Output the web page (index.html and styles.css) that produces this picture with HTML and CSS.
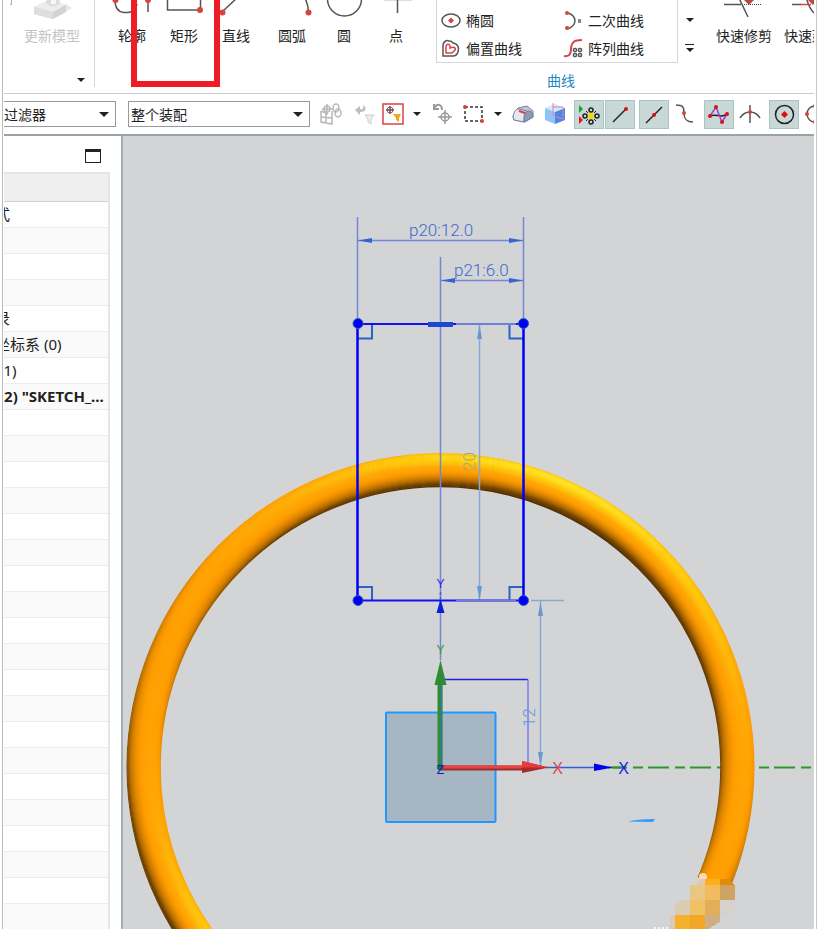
FILE: index.html
```html
<!DOCTYPE html>
<html lang="zh-CN">
<head>
    <meta charset="UTF-8">
    <meta name="viewport" content="width=device-width, initial-scale=1.0">
    <title>草图</title>
    <link rel="stylesheet" href="styles.css">
</head>
<body>
    <div class="app">
        <header class="ribbon">
            <div class="group update-group">
                <button class="tool disabled" disabled>
                    <svg width="84" height="25" viewBox="10 0 84 25">
                        <path d="M4 4.500 H11.500 V0" fill="none" stroke="#aaa"/>
                        <path d="M56 18 L72 8 L66 4 Z" fill="#e9e9e9"/>
                        <path d="M34 7 L50 0 L66 5 L66 12 L53 19 L34 14 Z" fill="#d3d3d3"/>
                        <path d="M34 7 L48 0 L66 5 L53 12 Z" fill="#ececec"/>
                        <path d="M34 7 L53 12 V19 L34 14 Z" fill="#dedede"/>
                        <ellipse cx="53" cy="2" rx="7" ry="4" fill="#ddd"/>
                        <rect x="51" y="0" width="5" height="4" fill="#f8f8f8"/>
                    </svg>
                    <span>更新模型</span>
                </button>
                <button class="drop group-drop" aria-label="更多"></button>
            </div>

            <div class="group curve-group">
                <button class="tool">
                    <svg width="52" height="25" viewBox="106 0 52 25">
                        <path d="M115 0 C115 8 118 12 124 12.500 H128 C133 12 136 9 137 4 M148 0 V12" class="ink"/>
                        <circle cx="115.500" cy="0" r="3" class="dot"/>
                        <circle cx="148" cy="0" r="3" class="dot"/>
                    </svg>
                    <span>轮廓</span>
                </button>
                <button class="tool marked">
                    <svg width="52" height="25" viewBox="158 0 52 25">
                        <path d="M167.500 0 V10 H200.500 V0" class="ink"/>
                        <circle cx="200" cy="10" r="3" class="dot"/>
                    </svg>
                    <span>矩形</span>
                </button>
                <button class="tool">
                    <svg width="52" height="25" viewBox="210 0 52 25">
                        <path d="M222 12 L238 -3" class="ink"/>
                        <circle cx="222.500" cy="12.500" r="3" class="dot"/>
                    </svg>
                    <span>直线</span>
                </button>
                <button class="tool wide">
                    <svg width="60" height="25" viewBox="262 0 60 25">
                        <path d="M305 -2 Q308 4 308.500 12" class="ink"/>
                        <circle cx="308.500" cy="12.500" r="3" class="dot"/>
                    </svg>
                    <span>圆弧</span>
                </button>
                <button class="tool narrow">
                    <svg width="44" height="25" viewBox="322 0 44 25">
                        <circle cx="344.500" cy="-1" r="17" class="ink"/>
                    </svg>
                    <span>圆</span>
                </button>
                <button class="tool wide">
                    <svg width="60" height="25" viewBox="366 0 60 25">
                        <path d="M384 0 H412" stroke="#bbb"/>
                        <path d="M397.500 0 V13" class="ink"/>
                    </svg>
                    <span>点</span>
                </button>

                <div class="gallery-wrap">
                    <div class="gallery">
                        <button class="entry">
                            <svg width="20" height="20" viewBox="0 0 20 20">
                                <ellipse cx="10" cy="10.500" rx="9" ry="6.500" class="ink"/>
                                <path d="M10 7.500 L13 10.500 L10 13.500 L7 10.500 Z" class="dot"/>
                            </svg>
                            <span>椭圆</span>
                        </button>
                        <button class="entry">
                            <svg width="20" height="20" viewBox="0 0 20 20">
                                <path d="M4 3 C9 3 12 8 12 10.500 C12 15 8 18 4 19" class="ink"/>
                                <circle cx="4" cy="3" r="2" class="dot"/>
                                <circle cx="4" cy="18" r="2" class="dot"/>
                                <rect x="15" y="9" width="3" height="4" fill="#888"/>
                            </svg>
                            <span>二次曲线</span>
                        </button>
                        <button class="entry">
                            <svg width="20" height="20" viewBox="0 0 20 20">
                                <path d="M2 18 V8 C2 3 6 2 8 3 C11 3 12 5 12 5 C18 6 18 11 17 14 C16 17 14 18 12 18 Z" class="ink"/>
                                <path d="M5 15 V9 C5 6 8 5 9 8 V10 C13 8 15 10 14 12 L11 15 Z" class="redline"/>
                            </svg>
                            <span>偏置曲线</span>
                        </button>
                        <button class="entry">
                            <svg width="20" height="20" viewBox="0 0 20 20">
                                <path d="M1 18 C8 19 8 14 8 10 C9 4 11 2 19 2" class="redline thick"/>
                                <g class="ink">
                                    <rect x="10.500" y="10.500" width="3" height="3" rx="1"/>
                                    <rect x="15.500" y="10.500" width="3" height="3" rx="1"/>
                                    <rect x="10.500" y="15.500" width="3" height="3" rx="1"/>
                                    <rect x="15.500" y="15.500" width="3" height="3" rx="1"/>
                                </g>
                            </svg>
                            <span>阵列曲线</span>
                        </button>
                    </div>
                    <div class="group-name">曲线</div>
                </div>
                <div class="scroller">
                    <button class="drop" aria-label="向下"></button>
                    <button class="drop more" aria-label="展开"></button>
                </div>

                <button class="tool wide">
                    <svg width="60" height="25" viewBox="714 0 60 25">
                        <path d="M724 4.500 H741 M738 -4 L748 17" class="ink"/>
                        <path d="M744 4.500 H762" stroke="#444" stroke-dasharray="1 1"/>
                        <path d="M744 0 H754 L749 5 Z" fill="#b9493f"/>
                    </svg>
                    <span>快速修剪</span>
                </button>
                <button class="tool wide last">
                    <svg width="60" height="25" viewBox="782 0 60 25">
                        <path d="M792 4.500 H801 M806 -4 C808 6 811 10 814 13" class="ink"/>
                        <path d="M800 4.500 H811" class="redline"/>
                        <path d="M808 0 H818 L813 5 Z" fill="#b9493f"/>
                    </svg>
                    <span>快速延伸</span>
                </button>
            </div>
        </header>

        <div class="selection-bar">
            <div class="select filter">
                <select aria-label="过滤器"><option>过滤器</option></select>
            </div>
            <div class="select scope">
                <select aria-label="选择范围"><option>整个装配</option></select>
            </div>
            <div class="icons">
                <div class="set">
                    <button class="icon" aria-label="装配约束">
                        <svg width="24" height="24" viewBox="0 0 24 24" fill="none" stroke="#b8b8b8" stroke-width="1.500">
                            <path d="M2 9 V20 L13 22 V9 M2 15 L13 16 M7 10 V21 M2 9 L7 11 M8 2 V13 M3 7 H14"/>
                            <circle cx="8" cy="7" r="3"/>
                            <ellipse cx="17" cy="6" rx="3" ry="4"/>
                            <ellipse cx="19" cy="11" rx="3" ry="4"/>
                        </svg>
                    </button>
                </div>
                <div class="set">
                    <button class="icon" aria-label="重置过滤器">
                        <svg width="24" height="24" viewBox="0 0 24 24">
                            <path d="M2 8 L7 4 V7 C10 8 11 6 10 3 C14 5 14 10 7 10 V13 Z" fill="#bdbdbd"/>
                            <path d="M12 13 H21 L18 17 V22 L15 20 V17 Z" fill="#eee" stroke="#ccc"/>
                        </svg>
                    </button>
                    <button class="icon small" aria-label="过滤">
                        <svg width="22" height="22" viewBox="0 0 22 22">
                            <rect x="1" y="1" width="20" height="20" fill="#fff" stroke="#d8434b" stroke-width="1.500"/>
                            <circle cx="8" cy="7" r="3" fill="none" stroke="#d8434b"/>
                            <path d="M8 3 V11 M4 7 H12" stroke="#555" stroke-width="1.500"/>
                            <path d="M11 11 H19 L17 15 V19 L14 17 V15 Z" fill="#f0a91e"/>
                        </svg>
                    </button>
                </div>
                <button class="drop" aria-label="过滤选项"></button>
                <div class="set">
                    <button class="icon" aria-label="撤销选择">
                        <svg width="24" height="24" viewBox="0 0 24 24" fill="none" stroke="#999" stroke-width="1.500">
                            <path d="M3 2 V7 H8 M3 6 C6 1 11 2 11 8" stroke-width="2"/>
                            <circle cx="14" cy="15" r="4"/>
                            <path d="M14 8 V22 M7 15 H21"/>
                        </svg>
                    </button>
                    <button class="icon" aria-label="矩形选择">
                        <svg width="24" height="24" viewBox="0 0 24 24">
                            <rect x="3" y="5" width="17" height="14" fill="none" stroke="#333" stroke-width="1.500" stroke-dasharray="3 2"/>
                            <circle cx="3" cy="5" r="2" class="dot"/>
                            <circle cx="20" cy="19" r="2" class="dot"/>
                        </svg>
                    </button>
                    <button class="drop" aria-label="选择方式"></button>
                </div>
                <div class="set">
                    <button class="icon" aria-label="着色">
                        <svg width="24" height="24" viewBox="0 0 24 24" stroke="#77809a">
                            <path d="M1 15 L6 6 L15 4 L21 9 V15 L13 20 L2 18 Z" fill="#bfc8db"/>
                            <path d="M1 15 C2 9 4 7 7 7 L15 9 C12 10 12 14 12 20 L2 18 Z" fill="#e4e8f1"/>
                            <path d="M12 20 C12 12 14 9 17 9 C20 9 21 12 21 15 Z" fill="#8b99b3"/>
                            <path d="M7 9 L13 11" stroke="#e23b3b" stroke-width="2"/>
                        </svg>
                    </button>
                    <button class="icon" aria-label="视图方块">
                        <svg width="24" height="24" viewBox="0 0 24 24">
                            <path d="M2 6 L12 2 L22 6 L12 10 Z" fill="#d5e8fb"/>
                            <path d="M2 6 L12 10 V22 L2 18 Z" fill="#8fc4f8"/>
                            <path d="M22 6 L12 10 V22 L22 18 Z" fill="#4e86e8"/>
                            <path d="M10 1 V14 L21 17 M10 5 H20 V15" fill="none" stroke="#d98a9e"/>
                        </svg>
                    </button>
                </div>
                <div class="set">
                    <button class="icon on" aria-label="启用捕捉点">
                        <svg width="24" height="24" viewBox="0 0 24 24">
                            <path d="M2 3 L6 7 L2 11 Z" fill="#14a51e"/>
                            <path d="M2 14 L6 18 L2 22 Z" fill="#e01818"/>
                            <circle cx="14" cy="14" r="3" fill="#f6d800"/>
                            <g fill="none" stroke="#222" stroke-width="1.500">
                                <circle cx="14" cy="8" r="2"/>
                                <circle cx="14" cy="20" r="2"/>
                                <circle cx="8" cy="14" r="2"/>
                                <circle cx="20" cy="14" r="2"/>
                            </g>
                            <path d="M9 9 L11 11 M19 9 L17 11 M9 19 L11 17 M19 19 L17 17" stroke="#222"/>
                        </svg>
                    </button>
                    <button class="icon on" aria-label="端点">
                        <svg width="24" height="24" viewBox="0 0 24 24">
                            <path d="M5 20 L18 7" stroke="#222" stroke-width="1.500"/>
                            <circle cx="18" cy="7" r="2" class="dot strong"/>
                        </svg>
                    </button>
                </div>
                <div class="set">
                    <button class="icon on" aria-label="中点">
                        <svg width="24" height="24" viewBox="0 0 24 24">
                            <path d="M4 21 L20 5" stroke="#222" stroke-width="1.500"/>
                            <circle cx="12" cy="13" r="2" class="dot strong"/>
                        </svg>
                    </button>
                    <button class="icon" aria-label="控制点">
                        <svg width="24" height="24" viewBox="0 0 24 24">
                            <path d="M3 3 C10 3 11 5 11 11 C11 18 14 20 20 20" class="ink"/>
                            <circle cx="11" cy="11" r="2" class="dot"/>
                        </svg>
                    </button>
                </div>
                <div class="set">
                    <button class="icon on" aria-label="极点">
                        <svg width="24" height="24" viewBox="0 0 24 24">
                            <path d="M3 14 C10 11 13 17 21 12" fill="none" stroke="#222" stroke-width="1.500"/>
                            <path d="M3 14 L9 5 L15 20 L20 12" fill="none" stroke="#9b3fd0" stroke-width="1.500"/>
                            <circle cx="3" cy="14" r="2" class="dot strong"/>
                            <circle cx="9" cy="5" r="2" class="dot strong"/>
                            <circle cx="15" cy="20" r="2" class="dot strong"/>
                            <circle cx="20" cy="12" r="2" class="dot strong"/>
                        </svg>
                    </button>
                    <button class="icon" aria-label="交点">
                        <svg width="24" height="24" viewBox="0 0 24 24">
                            <path d="M2 16 C7 8 17 8 22 16 M12 3 V21" class="ink"/>
                            <circle cx="12" cy="10" r="2" class="dot"/>
                        </svg>
                    </button>
                </div>
                <div class="set">
                    <button class="icon on" aria-label="圆心">
                        <svg width="24" height="24" viewBox="0 0 24 24">
                            <circle cx="12.500" cy="12.500" r="9" fill="none" stroke="#222" stroke-width="1.500"/>
                            <path d="M12.500 9 L16 12.500 L12.500 16 L9 12.500 Z" class="dot strong"/>
                        </svg>
                    </button>
                    <button class="icon" aria-label="象限点">
                        <svg width="24" height="24" viewBox="0 0 24 24">
                            <circle cx="12" cy="12" r="8" class="ink"/>
                            <circle cx="4" cy="12" r="2" class="dot"/>
                            <circle cx="12" cy="4" r="2" class="dot"/>
                            <circle cx="12" cy="20" r="2" class="dot"/>
                        </svg>
                    </button>
                </div>
            </div>
        </div>

        <main class="workspace">
            <aside class="navigator">
                <div class="panel-top">
                    <button class="restore" aria-label="还原"></button>
                </div>
                <table class="tree">
                    <thead><tr><th></th></tr></thead>
                    <tbody>
                        <tr><td>式</td></tr>
                        <tr><td></td></tr>
                        <tr><td></td></tr>
                        <tr><td></td></tr>
                        <tr><td>录</td></tr>
                        <tr><td>坐标系 (0)</td></tr>
                        <tr><td class="number">(1)</td></tr>
                        <tr class="active"><td class="number">(2) "SKETCH_...</td></tr>
                        <tr><td></td></tr>
                        <tr><td></td></tr>
                        <tr><td></td></tr>
                        <tr><td></td></tr>
                        <tr><td></td></tr>
                        <tr><td></td></tr>
                        <tr><td></td></tr>
                        <tr><td></td></tr>
                        <tr><td></td></tr>
                        <tr><td></td></tr>
                        <tr><td></td></tr>
                        <tr><td></td></tr>
                        <tr><td></td></tr>
                        <tr><td></td></tr>
                        <tr><td></td></tr>
                        <tr><td></td></tr>
                        <tr><td></td></tr>
                        <tr><td></td></tr>
                        <tr><td></td></tr>
                        <tr><td></td></tr>
                    </tbody>
                </table>
            </aside>

            <section class="view">
                <svg class="scene" viewBox="123 136 691 793" preserveAspectRatio="xMinYMin slice">
                    <defs id="shades">
                        <clipPath id="ringCut">
                            <path d="M123 136 H814 V889 H735 L697 877 H400 V960 H123 Z"/>
                        </clipPath>
                    </defs>

                    <!-- x axis of the datum, passes behind the ring -->
                    <path d="M613 767.500 H811" class="axis"/>
                    <g id="ring" clip-path="url(#ringCut)"></g>

                    <!-- mosaic patch -->
                    <circle cx="703" cy="877" r="4" fill="#f8dcb8"/>
                    <g shape-rendering="crispEdges">
                        <path d="M695 885 L700 879 H705 V885 Z" fill="#dccbb0"/>
                        <rect x="705" y="879" width="15" height="6" fill="#fcae1c"/>
                        <path d="M720 879 H728 L735 885 H720 Z" fill="#e08c08"/>
                        <rect x="690" y="885" width="15" height="15" fill="#e9c684"/>
                        <rect x="705" y="885" width="15" height="15" fill="#f1bb5e"/>
                        <rect x="720" y="885" width="15" height="15" fill="#cfa463"/>
                        <path d="M675 915 V905 L683 900 H690 V915 Z" fill="#dacbb2"/>
                        <rect x="690" y="900" width="15" height="15" fill="#efc267"/>
                        <rect x="705" y="900" width="15" height="15" fill="#e2ae5c"/>
                        <path d="M720 900 H735 V910 L730 915 H720 Z" fill="#d5d2ce"/>
                        <rect x="670" y="915" width="5" height="14" fill="#dacbb2"/>
                        <rect x="675" y="915" width="15" height="14" fill="#f6b12c"/>
                        <rect x="690" y="915" width="15" height="14" fill="#f3a727"/>
                        <path d="M705 915 H720 V922 L708 929 H705 Z" fill="#ceae82"/>
                    </g>
                    <path d="M654 928 H668" stroke="#f4f4f4" stroke-width="2" stroke-dasharray="2 2"/>
                    <path d="M628 821.500 Q636 819 655 819 L653 822 Z" fill="#2f9bff"/>

                    <!-- datum plane -->
                    <rect x="386" y="712.500" width="109.500" height="109.500" rx="1" fill="#a7b6c3" stroke="#1e98ff" stroke-width="2"/>
                    <path d="M440.500 679.500 H528" stroke="#2020e0" stroke-width="1.500"/>
                    <path d="M528 679.500 V767" stroke="#7d7de8" stroke-width="1.500"/>

                    <!-- dimensions -->
                    <g class="dim">
                        <path d="M357.500 217 V318 M523.500 217 V318 M357.500 240.500 H523.500 M440.500 257 V660 M440.500 280.500 H523.500"/>
                        <path class="tip" d="M358 240.500 L372 238 V243 Z M523 240.500 L509 238 V243 Z M441 280.500 L455 278 V283 Z M523 280.500 L509 278 V283 Z"/>
                        <text x="409" y="236">p20:12.0</text>
                        <text x="454" y="276">p21:6.0</text>
                    </g>
                    <g class="dim pale">
                        <path d="M479.500 324 V600 M540.500 601 V767 M531 600.500 H564"/>
                        <path class="tip" d="M479.500 325 L477 339 H482 Z M479.500 600 L477 586 H482 Z M540.500 602 L538 616 H543 Z M540.500 766 L538 752 H543 Z"/>
                        <text transform="translate(475 471) rotate(-90)" class="faded">20</text>
                        <text transform="translate(535 727) rotate(-90)">12</text>
                    </g>

                    <!-- sketched rectangle -->
                    <g fill="none" stroke="#2a62c8" stroke-width="2">
                        <path d="M358 338.500 H372 V325 M523 338.500 H509.500 V325 M358 587 H372 V600 M523 587 H509.500 V600"/>
                    </g>
                    <path d="M357.500 324 H523.500 M357.500 600.500 H523.500" stroke="#1212ee" stroke-width="2"/>
                    <path d="M456 324 H516 M456 600.500 H516" stroke="#6e7fd8" stroke-width="2"/>
                    <path d="M357.500 324 V600 M523.500 324 V600" stroke="#0000fa" stroke-width="2.500"/>
                    <path d="M428 324.500 H453" stroke="#1b48cf" stroke-width="5"/>
                    <g fill="#0000f5" stroke="#2a5fb8">
                        <circle cx="358" cy="323.500" r="5"/>
                        <circle cx="523.500" cy="323.500" r="5"/>
                        <circle cx="358" cy="600.500" r="5"/>
                        <circle cx="523.500" cy="600.500" r="5"/>
                    </g>
                    <path d="M440.500 599 L436.500 613 H444.500 Z" fill="#0a1ed8"/>
                    <path d="M440.500 592 V600" stroke="#3b5bd8" stroke-width="1.500" stroke-dasharray="3 2"/>

                    <!-- coordinate triad -->
                    <path d="M546 767.500 H600" stroke="#2e5fd0" stroke-width="1.500"/>
                    <path d="M608 767.500 H626" stroke="#2c962c" stroke-width="2"/>
                    <path d="M594 763.500 L613 767.500 L594 771 Z" fill="#0000f0"/>
                    <path d="M440 768 V684" stroke="#2f8c35" stroke-width="5"/>
                    <path d="M441.500 768 V684" stroke="#3a76a0" stroke-width="1.500"/>
                    <path d="M440.500 660 L434.500 685 H446.500 Z" fill="#2f8c35"/>
                    <path d="M440.500 768 H524" stroke="#9c3030" stroke-width="5"/>
                    <path d="M440.500 767 H524" stroke="#ee4040" stroke-width="3"/>
                    <path d="M522 761 L549 767.500 L522 773 Z" fill="#a82a2a"/>
                    <path d="M522 761 L549 767.500 H522 Z" fill="#e83a3a"/>
                    <circle cx="440" cy="767.500" r="3" fill="#1f7040"/>
                    <g class="letters">
                        <text x="440.500" y="588" fill="#2222e8">Y</text>
                        <text x="440.500" y="654" fill="#2f9a3a">Y</text>
                        <text x="440.500" y="774" fill="#1414c8">Z</text>
                        <text x="557.500" y="774" fill="#e04444" class="big">X</text>
                        <text x="623.500" y="774" fill="#1a1af0" class="big">X</text>
                    </g>
                </svg>
            </section>
        </main>
    </div>

    <script src="ring.js"></script>
</body>
</html>
```
FILE: styles.css
```css
* {
    box-sizing: border-box;
}

body {
    margin: 0;
    background: #fff;
    font-family: "Noto Sans", "Noto Sans CJK SC", sans-serif;
    font-size: 14px;
    color: #222;
}

button {
    border: none;
    padding: 0;
    margin: 0;
    background: none;
    font: inherit;
    color: inherit;
}

svg {
    display: block;
}

.app {
    display: flex;
    flex-direction: column;
    height: 100vh;
    margin: 0 22px 0 2px;
    padding: 0 2px 0 1px;
    border-left: 1px solid #bbb;
    border-right: 1px solid #c8c8c8;
    overflow: hidden;
}

/* icon strokes */
.ink {
    fill: none;
    stroke: #555;
    stroke-width: 1.5;
}

.redline {
    fill: none;
    stroke: #d8434b;
    stroke-width: 1.5;
}

.redline.thick {
    stroke-width: 2;
}

.dot {
    fill: #d8433d;
    stroke: none;
}

.dot.strong {
    fill: #e01010;
}

/* ribbon */
.ribbon {
    display: flex;
    flex: 0 0 94px;
    border-bottom: 1px solid #ccc;
    font-family: "Noto Sans CJK SC", sans-serif;
    overflow: hidden;
}

.group {
    display: flex;
    align-items: flex-start;
}

.update-group {
    flex: 0 0 91px;
    flex-direction: column;
    align-items: flex-end;
    height: 87px;
    border-right: 1px solid #d5d5d5;
}

.group-drop {
    margin-top: auto;
    margin-right: 6px;
}

.curve-group {
    flex: 1;
    padding-left: 11px;
}

.tool {
    position: relative;
    flex: 0 0 52px;
    line-height: 20px;
    text-align: center;
    white-space: nowrap;
}

.update-group .tool {
    flex: 0 0 auto;
    width: 84px;
}

.tool.wide {
    flex-basis: 60px;
}

.tool.narrow {
    flex-basis: 44px;
}

.tool.disabled {
    color: #c4c4c4;
}

.tool.last {
    margin-left: 8px;
}

.marked::after {
    content: '';
    position: absolute;
    top: -8px;
    left: -27px;
    width: 77px;
    height: 83px;
    border: 6px solid #ee1c25;
    z-index: 2;
}

.gallery-wrap {
    flex: 0 0 242px;
    margin-left: 10px;
}

.gallery {
    display: grid;
    grid-template-columns: 122px 1fr;
    grid-auto-rows: 28px;
    padding: 6px 0 0 4px;
    border: 1px solid #d5d5d5;
    border-top: none;
}

.entry {
    display: flex;
    align-items: center;
    gap: 5px;
    line-height: 20px;
    white-space: nowrap;
}

.group-name {
    padding: 6px 0 0 8px;
    text-align: center;
    line-height: 22px;
    color: #2487c0;
}

.scroller {
    display: flex;
    flex: 0 0 36px;
    flex-direction: column;
    gap: 13px;
    padding: 12px 0 0 4px;
}

.drop {
    display: flex;
    flex-direction: column;
    align-items: center;
    justify-content: center;
    width: 15px;
    height: 15px;
}

.drop::after {
    content: '';
    border: 4px solid transparent;
    border-top-color: #222;
    border-bottom: none;
}

.drop.more::before {
    content: '';
    width: 9px;
    height: 1px;
    margin-bottom: 3px;
    background: #222;
}

/* selection bar */
.selection-bar {
    display: flex;
    flex: 0 0 42px;
    align-items: center;
    border-bottom: 2px solid #9aa3a6;
    overflow: hidden;
}

.select {
    position: relative;
    flex: 0 0 auto;
}

.select::after {
    content: '';
    position: absolute;
    top: 11px;
    right: 7px;
    border: 5px solid transparent;
    border-top-color: #222;
    border-bottom: none;
    pointer-events: none;
}

.select select {
    width: 100%;
    height: 26px;
    padding: 0 20px 0 2px;
    border: 1px solid #999;
    border-radius: 0;
    background: #fff;
    color: #222;
    font: 14px "Noto Sans CJK SC", sans-serif;
    appearance: none;
    -webkit-appearance: none;
}

.filter {
    width: 112px;
    margin-right: 12px;
}

.filter select {
    padding-left: 0;
    border-left: none;
}

.scope {
    width: 182px;
    margin-right: 6px;
}

.icons,
.set {
    display: flex;
    align-items: center;
}

.icons {
    gap: 4px;
}

.set {
    gap: 1px;
}

.icon {
    display: flex;
    flex: 0 0 30px;
    align-items: center;
    justify-content: center;
    height: 29px;
    border: 1px solid transparent;
}

.icon.small {
    flex-basis: 22px;
}

.icon.on {
    background: #c8d8d6;
    border-color: #a9c6c0;
}

/* workspace */
.workspace {
    display: flex;
    flex: 1;
    min-height: 0;
}

.navigator {
    flex: 0 0 119px;
    border-right: 2px solid #a2acb1;
    overflow: hidden;
}

.panel-top {
    display: flex;
    justify-content: flex-end;
    height: 36px;
    padding: 13px 20px 0 0;
}

.restore {
    width: 16px;
    height: 14px;
    border: 1px solid #222;
    border-top-width: 3px;
}

.tree {
    width: 106px;
    table-layout: fixed;
    border-collapse: separate;
    border-spacing: 0;
    border-top: 2px solid #e5e5e5;
    border-right: 2px solid #e5e5e5;
}

.tree th,
.tree td {
    height: 26px;
    padding: 0;
    border-bottom: 1px solid #ececec;
    font-size: 15px;
    line-height: 25px;
    white-space: nowrap;
    overflow: hidden;
}

.tree th {
    height: 28px;
    background: #efefef;
    border-bottom-color: #d0d0d0;
}

.tree td {
    text-indent: -9px;
}

.tree td.number {
    text-indent: -5px;
}

.tree tr:nth-child(even) td {
    background: #fafafa;
}

.tree .active {
    font-weight: bold;
}

.view {
    flex: 1;
    min-width: 0;
    background: #d3d4d6;
    overflow: hidden;
}

.scene {
    width: 100%;
    height: 100%;
}

.axis {
    stroke: #2c962c;
    stroke-width: 2;
    stroke-dasharray: 10 5 21 6;
    stroke-dashoffset: -20;
}

.dim {
    fill: none;
    stroke: #7088d8;
    stroke-width: 1.5;
}

.dim .tip {
    fill: #3565d0;
    stroke: none;
}

.dim text {
    fill: #3d68cc;
    stroke: none;
    font: 300 17px Roboto, "Liberation Sans", sans-serif;
}

.dim.pale {
    stroke: #86a8d4;
}

.dim.pale .tip,
.dim.pale text {
    fill: #6798d0;
}

.dim.pale .faded {
    fill: #a5a58c;
}

.letters {
    text-anchor: middle;
    font: 12px "Liberation Sans", sans-serif;
}

.letters .big {
    font-size: 16px;
}
```
FILE: ring.js
```javascript
// Shaded torus: concentric strokes, each with a gradient along the light direction
const NS = 'http://www.w3.org/2000/svg';
const shades = document.getElementById('shades');
const ring = document.getElementById('ring');

const cx = 440.5, cy = 767;
const radius = 297, tube = 17;
const steps = 64;
const light = { x: 0.3, y: 0.72, z: 0.62 };

const ramp = [
    [-0.7, [72, 40, 0]],
    [-0.15, [116, 68, 0]],
    [0.1, [176, 106, 0]],
    [0.35, [226, 136, 0]],
    [0.55, [255, 156, 0]],
    [0.75, [255, 170, 6]],
    [0.92, [255, 204, 14]],
    [1, [255, 228, 36]]
];

function shade(d) {
    if (d <= ramp[0][0]) return `rgb(${ramp[0][1]})`;
    for (let i = 1; i < ramp.length; i++) {
        if (d <= ramp[i][0]) {
            const [d0, a] = ramp[i - 1];
            const [d1, b] = ramp[i];
            const k = (d - d0) / (d1 - d0);
            return `rgb(${a.map((v, j) => Math.round(v + (b[j] - v) * k))})`;
        }
    }
    return `rgb(${ramp[ramp.length - 1][1]})`;
}

function add(parent, tag, attrs) {
    const el = document.createElementNS(NS, tag);
    for (const key in attrs) el.setAttribute(key, attrs[key]);
    parent.appendChild(el);
    return el;
}

const flat = Math.hypot(light.x, light.y);
const ux = light.x / flat, uy = -light.y / flat;

// solid base, so nothing shows between the strokes
add(ring, 'circle', { cx, cy, r: radius, fill: 'none', stroke: '#e89000', 'stroke-width': tube * 2 - 2 });

for (let i = 0; i < tube * 2; i++) {
    const offset = i - tube + 0.5;
    const r = radius + offset;
    const t = offset / tube;
    const nz = Math.sqrt(1 - t * t);

    const grad = add(shades, 'linearGradient', {
        id: 'shade' + i,
        gradientUnits: 'userSpaceOnUse',
        x1: cx - ux * r, y1: cy - uy * r,
        x2: cx + ux * r, y2: cy + uy * r
    });
    for (let s = 0; s <= steps; s++) {
        const along = 2 * s / steps - 1;
        add(grad, 'stop', {
            offset: s / steps,
            'stop-color': shade(t * flat * along + nz * light.z)
        });
    }
    add(ring, 'circle', {
        cx, cy, r,
        fill: 'none',
        stroke: `url(#shade${i})`,
        'stroke-width': i < tube * 2 - 1 ? 1.6 : 1
    });
}
```
